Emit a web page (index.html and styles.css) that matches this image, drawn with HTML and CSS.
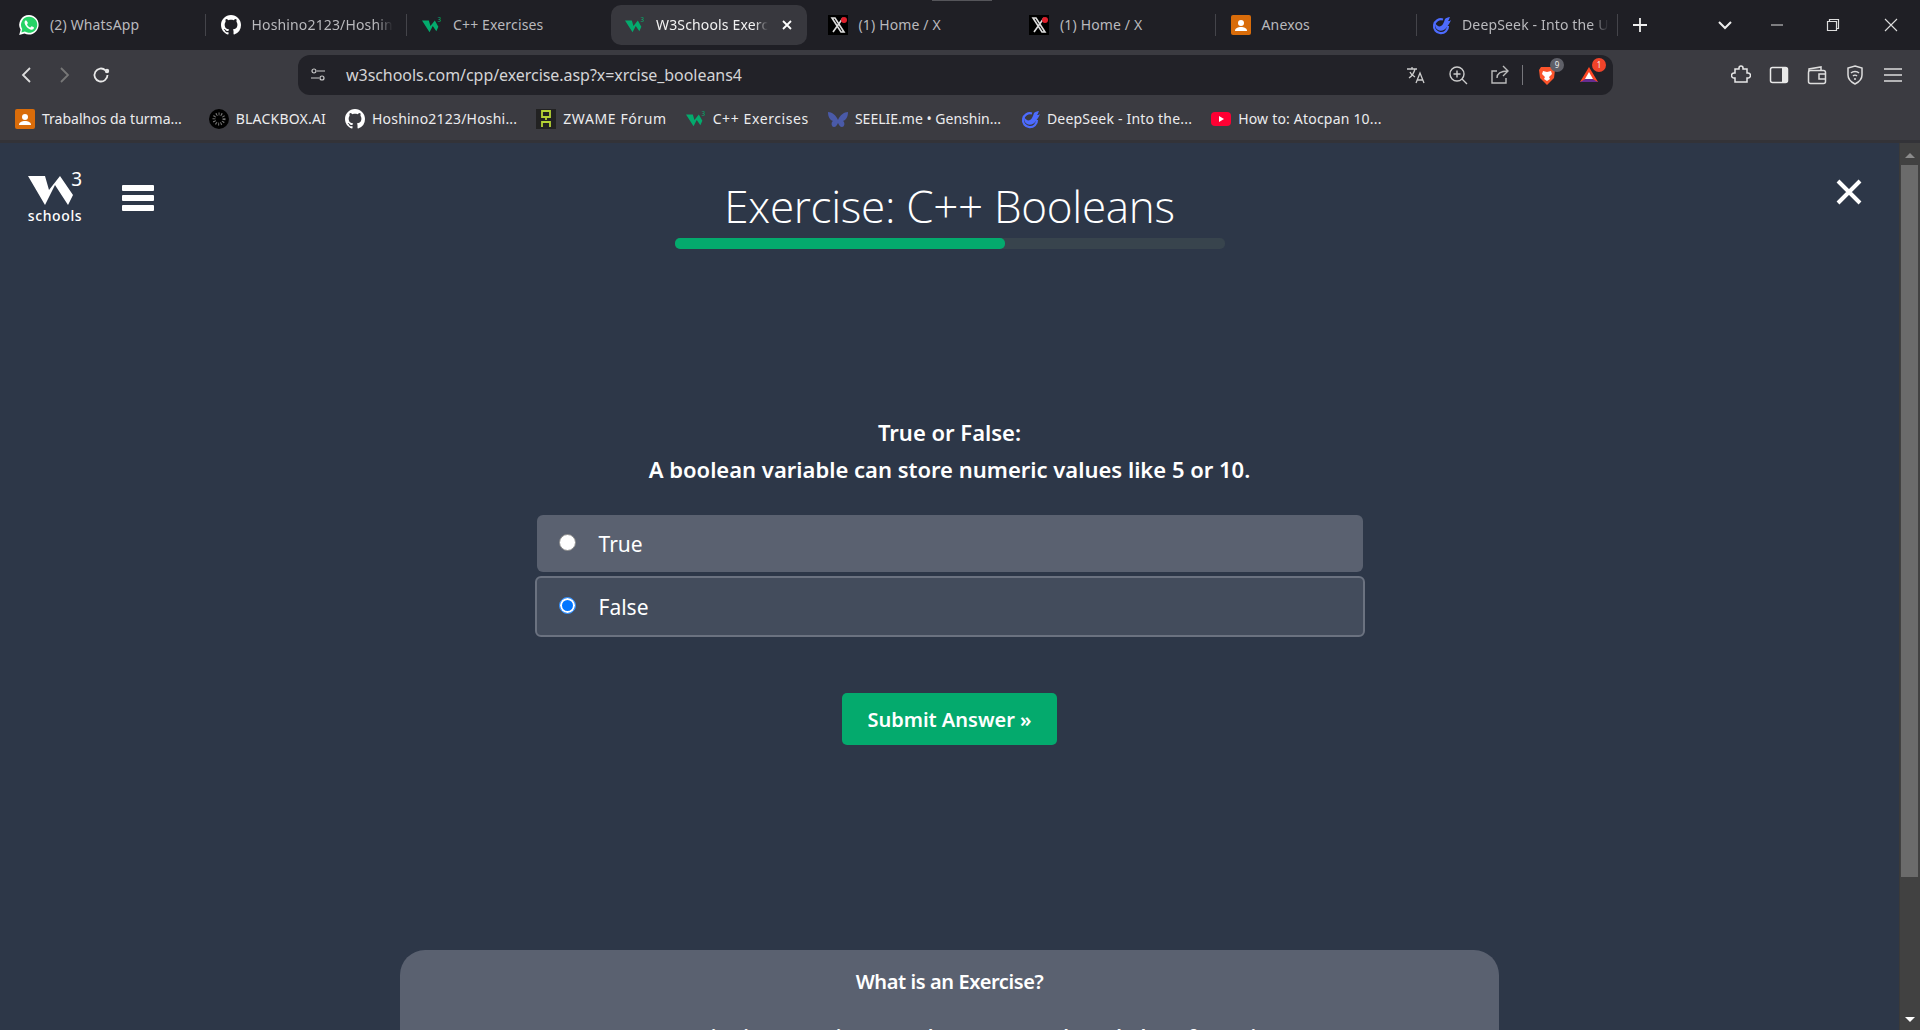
FILE: index.html
```html
<!DOCTYPE html>
<html lang="en">
<head>
    <meta charset="UTF-8">
    <title>W3Schools Exercise</title>
    <link rel="stylesheet" href="styles.css">
</head>
<body>
    <svg class="defs" width="0" height="0">
        <symbol id="i-github" viewBox="0 0 16 16"><path fill="#fff" d="M8 0C3.58 0 0 3.58 0 8c0 3.54 2.29 6.53 5.47 7.59.4.07.55-.17.55-.38v-1.49c-2.01.37-2.53-.49-2.69-.94-.09-.23-.48-.94-.82-1.13-.28-.15-.68-.52-.01-.53.63-.01 1.08.58 1.23.82.72 1.21 1.87.87 2.33.66.07-.52.28-.87.51-1.07-1.78-.2-3.64-.89-3.64-3.95 0-.87.31-1.59.82-2.15-.08-.2-.36-1.02.08-2.12 0 0 .67-.21 2.2.82.64-.18 1.32-.27 2-.27s1.36.09 2 .27c1.53-1.04 2.2-.82 2.2-.82.44 1.1.16 1.92.08 2.12.51.56.82 1.27.82 2.15 0 3.07-1.87 3.75-3.65 3.95.29.25.54.73.54 1.48v2.2c0 .21.15.46.55.38A8 8 0 0 0 16 8c0-4.42-3.58-8-8-8z"/></symbol>
        <symbol id="i-w3" viewBox="0 0 22 18"><path fill="#04aa6d" d="M0 4h7.500l1.800 6 4.800-6 3.900 7-2.200 5-4-6-3.500 7z"/><text x="17" y="6" font-size="7" font-family="Noto Sans" fill="#04aa6d">3</text></symbol>
        <symbol id="i-x" viewBox="0 0 20 20"><rect width="20" height="20" fill="#000"/><path fill="none" stroke="#ddd" stroke-width="1.600" d="M4 3h3l9 14h-3zM15 3 5 17"/><circle cx="16" cy="5" r="3" fill="#e0202c"/></symbol>
        <symbol id="i-class" viewBox="0 0 20 20"><rect width="20" height="20" rx="2" fill="#d96c0a"/><circle cx="10" cy="8" r="3" fill="#fff"/><path fill="#fff" d="M4 16c0-3 3-4 6-4s6 1 6 4z"/></symbol>
        <symbol id="i-deep" viewBox="0 0 20 18"><path fill="none" stroke="#4d6bfe" stroke-width="2.200" d="M12 3.500A7 7 0 1 0 17 10"/><path fill="#4d6bfe" d="M4 7c2 3 4 4 6 3 2-1 3-4 4-7 1-1 3-2 5-2-1 2-1 3-2 4 1 0 2 0 3-1-1 3-3 5-4 7-2 3-6 5-9 3-2-1-3-3-3-7z"/></symbol>
    </svg>

    <div class="tab-strip">
        <div class="tab">
            <svg class="favicon" viewBox="0 0 20 20"><path fill="#fff" d="M10 0a9.800 9.800 0 0 0-8.400 14.800L.2 20l5.300-1.400A9.800 9.800 0 1 0 10 0z"/><path fill="#25d366" d="M10 1.800a8 8 0 0 0-6.800 12.200l-.8 3.400 3.500-.9A8 8 0 1 0 10 1.800z"/><path fill="#fff" d="M7 5.200c-.5 0-1.400.7-1.400 2.300 0 2.700 3.400 6.800 7 7.200 1.400 0 2.300-.9 2.400-2 0-.5-2-1.400-2.300-1.400-.5 0-.9 1.100-1.400 1.100-.9 0-3-2-3.200-3 0-.4.800-.9.800-1.300S7.500 5.200 7 5.200z"/></svg>
            <span class="tab-title">(2) WhatsApp</span>
        </div>
        <div class="tab">
            <svg class="favicon"><use href="#i-github"/></svg>
            <span class="tab-title tab-fade">Hoshino2123/Hoshin</span>
        </div>
        <div class="tab tab-short">
            <svg class="favicon"><use href="#i-w3"/></svg>
            <span class="tab-title">C++ Exercises</span>
        </div>
        <div class="tab tab-active">
            <svg class="favicon"><use href="#i-w3"/></svg>
            <span class="tab-title tab-fade">W3Schools Exerc</span>
            <svg class="tab-close" viewBox="0 0 10 10"><path d="M1 1l8 8M9 1l-8 8" stroke="#fff" stroke-width="1.800"/></svg>
        </div>
        <div class="tab tab-noline">
            <svg class="favicon"><use href="#i-x"/></svg>
            <span class="tab-title">(1) Home / X</span>
        </div>
        <div class="tab">
            <svg class="favicon"><use href="#i-x"/></svg>
            <span class="tab-title">(1) Home / X</span>
        </div>
        <div class="tab">
            <svg class="favicon"><use href="#i-class"/></svg>
            <span class="tab-title">Anexos</span>
        </div>
        <div class="tab tab-last">
            <svg class="favicon"><use href="#i-deep"/></svg>
            <span class="tab-title tab-fade">DeepSeek - Into the U</span>
        </div>
        <svg class="new-tab" viewBox="0 0 14 14"><path d="M7 0v14M0 7h14" stroke="#eee" stroke-width="1.800"/></svg>
        <div class="win-controls">
            <svg class="win-btn win-chevron" viewBox="0 0 14 14"><path d="M1 4l6 6 6-6" fill="none" stroke="#eee" stroke-width="2"/></svg>
            <svg class="win-btn" viewBox="0 0 14 14"><path d="M1 7h12" stroke="#ddd" stroke-width="1"/></svg>
            <svg class="win-btn win-restore" viewBox="0 0 14 14"><path d="M1.500 3.500h9v9h-9zM3.500 3.500v-2h9v9h-2" fill="none" stroke="#ddd" stroke-width="1.200"/></svg>
            <svg class="win-btn" viewBox="0 0 14 14"><path d="M1 1l12 12M13 1L1 13" stroke="#ddd" stroke-width="1.100"/></svg>
        </div>
    </div>

    <div class="toolbar">
        <svg class="tool-icon" viewBox="0 0 20 20"><path d="M13 3l-7 7 7 7" fill="none" stroke="#ddd" stroke-width="1.800"/></svg>
        <svg class="tool-icon" viewBox="0 0 20 20"><path d="M7 3l7 7-7 7" fill="none" stroke="#777" stroke-width="1.800"/></svg>
        <svg class="tool-icon" viewBox="0 0 20 20"><path d="M16.500 10a6.500 6.500 0 1 1-2-4.700" fill="none" stroke="#e8e8e8" stroke-width="1.800"/><circle cx="16" cy="6" r="2.200" fill="#e8e8e8"/></svg>
        <div class="omnibox">
            <svg class="site-icon" viewBox="0 0 16 16"><g fill="none" stroke="#ccc" stroke-width="1.200"><circle cx="4" cy="4" r="2"/><path d="M7 4h8M1 11h8"/><circle cx="12" cy="11" r="2"/></g></svg>
            <span class="url">w3schools.com/cpp/exercise.asp?x=xrcise_booleans4</span>
            <div class="omni-icons">
                <svg class="omni-icon" viewBox="0 0 20 20"><path d="M1 4h10M6 2v2M3 13c3-2 5-5 6-9M4 7c1 3 3 4 5 5M10 18l4-10 4 10M11.500 15h5" fill="none" stroke="#ccc" stroke-width="1.300"/></svg>
                <svg class="omni-icon" viewBox="0 0 20 20"><g fill="none" stroke="#ccc" stroke-width="1.400"><circle cx="9" cy="9" r="7"/><path d="M14 14l5 5M9 5.500v7M5.500 9h7"/></g></svg>
                <svg class="omni-icon" viewBox="0 0 20 20"><path d="M7 6H2v12h14v-5M7 13c0-5 4-7 11-7M13 1l5 5-5 5" fill="none" stroke="#bbb" stroke-width="1.400"/></svg>
                <span class="omni-sep"></span>
                <div class="ext">
                    <svg class="omni-icon" viewBox="0 0 20 20"><path fill="#fb542b" d="M4 2h12l2 3-1 8-7 7-7-7-1-8z"/><path fill="#fff" d="M6 6l4 1 4-1 1 3-3 3 1 2-3 2-3-2 1-2-3-3z"/></svg>
                    <span class="badge badge-grey">9</span>
                </div>
                <div class="ext">
                    <svg class="omni-icon" viewBox="0 0 20 20"><path fill="#ff4724" d="M10 2l9 15H1z"/><path fill="#662d91" d="M1 17l9-5 9 5z"/><path fill="#fff" d="M10 7l4 7h-8z"/></svg>
                    <span class="badge badge-red">1</span>
                </div>
            </div>
        </div>
        <div class="right-tools">
            <svg class="tool-icon" viewBox="0 0 20 20"><path d="M8 3a2 2 0 0 1 4 0v1h4v4h1a2.300 2.300 0 0 1 0 5h-1v4H4v-4H3a2.300 2.300 0 0 1 0-5h1V4h4z" fill="none" stroke="#e8e8e8" stroke-width="1.500"/></svg>
            <svg class="tool-icon" viewBox="0 0 20 20"><rect x="1.500" y="2.500" width="17" height="15" rx="2" fill="none" stroke="#e8e8e8" stroke-width="1.500"/><rect x="13" y="3" width="5" height="14" fill="#e8e8e8"/></svg>
            <svg class="tool-icon" viewBox="0 0 20 20"><g fill="none" stroke="#ddd" stroke-width="1.500"><path d="M2 6V4l12-2v4"/><rect x="1.500" y="5.500" width="17" height="13" rx="2"/><path d="M18 9h-6v5h6"/></g></svg>
            <svg class="tool-icon" viewBox="0 0 20 20"><g fill="none" stroke="#ddd" stroke-width="1.500"><path d="M10 1l7 2v7c0 4-3 7-7 9-4-2-7-5-7-9V3z"/><path d="M6 8c2-2 6-2 8 0M8 11c1-1 3-1 4 0"/></g><circle cx="10" cy="14" r="1" fill="#ddd"/></svg>
            <svg class="tool-icon" viewBox="0 0 20 20"><path d="M1 4h18M1 10h18M1 16h18" stroke="#ddd" stroke-width="1.500"/></svg>
        </div>
    </div>

    <div class="bookmarks">
        <div class="bookmark bookmark-first"><svg class="bm-icon"><use href="#i-class"/></svg><span>Trabalhos da turma...</span></div>
        <div class="bookmark"><svg class="bm-icon" viewBox="0 0 20 20"><circle cx="10" cy="10" r="10" fill="#000"/><circle cx="10" cy="10" r="5" fill="none" stroke="#777" stroke-width="3" stroke-dasharray="1 1.500"/></svg><span>BLACKBOX.AI</span></div>
        <div class="bookmark"><svg class="bm-icon"><use href="#i-github"/></svg><span>Hoshino2123/Hoshi...</span></div>
        <div class="bookmark bookmark-wide"><svg class="bm-icon" viewBox="0 0 20 20"><rect width="20" height="20" fill="#222"/><path d="M6 2h8v6H6zM10 8v3M6 18v-5h8v5" fill="none" stroke="#b5d334" stroke-width="1.800"/></svg><span>ZWAME Fórum</span></div>
        <div class="bookmark bookmark-wide"><svg class="bm-icon"><use href="#i-w3"/></svg><span>C++ Exercises</span></div>
        <div class="bookmark bookmark-tight"><svg class="bm-icon" viewBox="0 0 20 20"><path fill="#4a5aa8" d="M0 3c4 0 8 3 10 8 2-5 6-8 10-8 0 5-2 8-5 9 2 1 2 6-1 6-2 0-3-2-4-4-1 2-2 4-4 4-3 0-3-5-1-6-3-1-5-4-5-9z"/></svg><span>SEELIE.me • Genshin...</span></div>
        <div class="bookmark"><svg class="bm-icon"><use href="#i-deep"/></svg><span>DeepSeek - Into the...</span></div>
        <div class="bookmark"><svg class="bm-icon" viewBox="0 0 20 20"><rect y="3" width="20" height="14" rx="4" fill="#ff0033"/><path d="M8 7l5 3-5 3z" fill="#fff"/></svg><span>How to: Atocpan 10...</span></div>
    </div>

    <div class="viewport">
        <main class="page">
            <header class="page-head">
                <div class="logo-group">
                    <div class="logo">
                        <svg class="logo-mark" viewBox="0 0 45 29"><path fill="#fff" d="M0 0h17l4 14L32 0l13 19-5 10L27 9 17 29z"/></svg>
                        <span class="logo-three">3</span>
                        <span class="logo-text">schools</span>
                    </div>
                    <div class="burger"><span></span><span></span><span></span></div>
                </div>
                <div class="head-center">
                    <h1 class="title">Exercise: C++ Booleans</h1>
                    <div class="progress"><div class="progress-fill" style="width: 60%"></div></div>
                </div>
                <svg class="close" viewBox="0 0 26 26"><path d="M2 2l22 22M24 2L2 24" stroke="#fff" stroke-width="4"/></svg>
            </header>

            <section class="quiz">
                <p class="question">True or False:<br>A boolean variable can store numeric values like 5 or 10.</p>
                <div class="options">
                    <label class="option option-hover"><span class="radio"></span>True</label>
                    <label class="option option-checked"><span class="radio radio-on"></span>False</label>
                </div>
                <button class="submit">Submit Answer »</button>
            </section>

            <section class="info-card">
                <h2 class="info-title">What is an Exercise?</h2>
                <p class="info-text">An exercise is a question or task to test your knowledge of a topic.</p>
            </section>
        </main>
        <div class="scrollbar">
            <span class="arrow-up"></span>
            <div class="scroll-track"><div class="scroll-thumb"></div></div>
            <span class="arrow-down"></span>
        </div>
    </div>
</body>
</html>
```

FILE: styles.css
```css
html, body {
    margin: 0;
    height: 1030px;
    overflow: hidden;
}
body {
    display: flex;
    flex-direction: column;
    font-family: "Noto Sans", sans-serif;
    background-color: #2d3748;
    color: white;
}
.defs {
    position: absolute;
}
.tab-strip {
    height: 50px;
    flex: none;
    display: flex;
    align-items: center;
    padding-left: 4px;
    background-color: #1f1f25;
    box-sizing: border-box;
}
.tab {
    width: 201.5px;
    height: 40px;
    flex: none;
    box-sizing: border-box;
    display: flex;
    align-items: center;
    padding-left: 15px;
    padding-right: 6px;
    position: relative;
    font-size: 14px;
    letter-spacing: 0.15px;
    color: #b9b9bd;
}
.tab::after {
    content: "";
    position: absolute;
    right: 0;
    top: 9px;
    height: 22px;
    width: 1px;
    background-color: #44444a;
}
.tab-short::after, .tab-active::after, .tab-noline::after {
    display: none;
}
.tab-noline::before {
    content: "";
    position: absolute;
    left: 119px;
    top: -5px;
    width: 60px;
    height: 1px;
    background-color: #55555a;
}
.tab-active {
    width: 196px;
    margin: 0 5.5px 0 2.5px;
    padding-left: 14px;
    padding-right: 15px;
    background-color: #38383e;
    border-radius: 10px;
    color: #f2f2f2;
}
.tab-last {
    margin-left: -1px;
}
.favicon {
    width: 20px;
    height: 20px;
    flex: none;
    margin-right: 11px;
}
.tab-title {
    flex: 1;
    margin-top: -2px;
    white-space: nowrap;
}
.tab-fade {
    -webkit-mask-image: linear-gradient(to right, black 88%, transparent);
    mask-image: linear-gradient(to right, black 88%, transparent);
    flex: none;
}
.tab-close {
    width: 10px;
    height: 10px;
    margin-left: auto;
    flex: none;
}
.new-tab {
    width: 14px;
    height: 14px;
    margin-left: 15px;
}
.win-controls {
    margin-left: auto;
    display: flex;
    align-items: center;
    gap: 42px;
    padding-right: 22px;
}
.win-btn {
    width: 14px;
    height: 14px;
}
.win-chevron {
    margin-right: -4px;
}
.win-restore {
    margin-right: 2px;
}
.toolbar {
    height: 45px;
    flex: none;
    display: flex;
    align-items: flex-start;
    background-color: #3b3b41;
    box-sizing: border-box;
    padding-top: 5px;
    padding-left: 17px;
    gap: 17px;
}
.tool-icon {
    width: 20px;
    height: 20px;
    flex: none;
    margin-top: 10px;
}
.omnibox {
    width: 1315px;
    height: 40px;
    flex: none;
    margin-left: 170px;
    background-color: #222228;
    border-radius: 12px;
    display: flex;
    align-items: center;
    box-sizing: border-box;
    padding-left: 12px;
    padding-right: 14px;
}
.site-icon {
    width: 16px;
    height: 16px;
    margin-right: 20px;
}
.url {
    font-size: 16px;
    letter-spacing: -0.05px;
    color: #d4d4d6;
}
.omni-icons {
    margin-left: auto;
    display: flex;
    align-items: center;
    gap: 22px;
}
.omni-icon {
    width: 20px;
    height: 20px;
    display: block;
}
.omni-sep {
    width: 1px;
    height: 20px;
    background-color: #77777c;
    margin: 0 -8px 0 -10px;
}
.ext {
    position: relative;
}
.badge {
    position: absolute;
    top: -7px;
    right: -7px;
    width: 14px;
    height: 14px;
    border-radius: 50%;
    font-size: 8px;
    line-height: 14px;
    text-align: center;
    color: #eee;
}
.badge-grey {
    background-color: #5f6068;
}
.badge-red {
    background-color: #f0432a;
}
.right-tools {
    display: flex;
    gap: 18px;
    margin-left: 101px;
}
.bookmarks {
    height: 48px;
    flex: none;
    display: flex;
    align-items: center;
    padding-left: 15px;
    padding-top: 2px;
    gap: 19px;
    background-color: #3b3b41;
    border-bottom: 3px solid #333338;
    box-sizing: border-box;
    font-size: 14px;
    letter-spacing: 0.2px;
    color: #ececee;
}
.bookmark {
    display: flex;
    align-items: center;
    gap: 7px;
    white-space: nowrap;
}
.bookmark-first {
    margin-right: 8px;
    letter-spacing: 0;
}
.bookmark-wide {
    letter-spacing: 0.6px;
}
.bookmark-tight {
    letter-spacing: 0;
}
.bm-icon {
    width: 20px;
    height: 20px;
    flex: none;
}
.viewport {
    flex: 1;
    min-height: 0;
    display: flex;
}
.page {
    flex: 1;
    min-width: 0;
    overflow: hidden;
    background-color: #2d3748;
}
.page-head {
    height: 106px;
    display: flex;
    position: relative;
    justify-content: center;
}
.logo-group {
    position: absolute;
    left: 28px;
    top: 29px;
    display: flex;
    gap: 40px;
}
.logo {
    position: relative;
    width: 54px;
    height: 51px;
}
.logo-mark {
    position: absolute;
    left: 0;
    top: 4px;
    width: 45px;
    height: 29px;
}
.logo-three {
    position: absolute;
    right: 0;
    top: -5px;
    font-size: 19px;
    line-height: 24px;
}
.logo-text {
    position: absolute;
    left: -1px;
    bottom: 0;
    width: 56px;
    font-size: 14px;
    line-height: 14px;
    font-weight: 500;
    letter-spacing: 0.6px;
    text-align: center;
}
.burger {
    width: 32px;
    display: flex;
    flex-direction: column;
    gap: 4px;
    margin-top: 13px;
}
.burger span {
    height: 6px;
    background-color: white;
    border-radius: 1px;
}
.head-center {
    width: 550px;
    padding-top: 38px;
}
.title {
    margin: 0 0 6px;
    font-size: 44px;
    line-height: 51px;
    font-weight: 300;
    font-family: "Open Sans", sans-serif;
    text-align: center;
    white-space: nowrap;
    letter-spacing: -0.3px;
}
.progress {
    height: 11px;
    border-radius: 5px;
    background-color: #38444d;
}
.progress-fill {
    height: 100%;
    border-radius: 5px;
    background-color: #04aa6d;
}
.close {
    position: absolute;
    left: 1836px;
    top: 36px;
    width: 26px;
    height: 26px;
}
.quiz {
    width: 830px;
    margin: 0 auto;
    padding-top: 165px;
    display: flex;
    flex-direction: column;
    align-items: center;
}
.question {
    margin: 0 0 27px;
    font-size: 22px;
    line-height: 37px;
    font-weight: 600;
    text-align: center;
    white-space: nowrap;
}
.options {
    align-self: stretch;
    display: flex;
    flex-direction: column;
    gap: 4px;
}
.option {
    height: 57px;
    margin: 0 2px;
    display: flex;
    align-items: center;
    padding-left: 22px;
    border-radius: 6px;
    font-size: 21px;
}
.option-hover {
    background-color: #5a6170;
}
.option-checked {
    height: 61px;
    margin: 0;
    padding-left: 22px;
    background-color: #434c5c;
    border: 2px solid #6b7280;
    box-sizing: border-box;
}
.radio {
    width: 17px;
    height: 17px;
    border-radius: 50%;
    background-color: white;
    box-sizing: border-box;
    border: 1px solid #8a8a8a;
    margin-right: 23px;
    margin-top: -2px;
    flex: none;
}
.radio-on {
    background-color: #0075ff;
    border: 1px solid #3c96ff;
    box-shadow: inset 0 0 0 2px white;
}
.submit {
    margin-top: 56px;
    width: 215px;
    height: 52px;
    border: none;
    border-radius: 5px;
    background-color: #04aa6d;
    color: white;
    font-family: "Noto Sans", sans-serif;
    font-size: 20px;
    font-weight: 600;
}
.info-card {
    width: 1099px;
    margin: 205px auto 0;
    padding-top: 18px;
    box-sizing: border-box;
    background-color: #5a6170;
    border-radius: 25px 25px 0 0;
    text-align: center;
    height: 120px;
}
.info-title {
    margin: 0;
    font-size: 20px;
    line-height: 28px;
    font-weight: 600;
    letter-spacing: -0.4px;
}
.info-text {
    margin: 27px 0 0;
    font-size: 20px;
    font-weight: 600;
}
.scrollbar {
    width: 21px;
    flex: none;
    display: flex;
    flex-direction: column;
    align-items: center;
    background-color: #414141;
    border-left: 1px solid #3a3a3a;
    box-sizing: border-box;
}
.arrow-up {
    margin: 10px 0 7px;
    border-left: 5px solid transparent;
    border-right: 5px solid transparent;
    border-bottom: 5px solid #8c8c8c;
}
.scroll-track {
    flex: 1;
    align-self: stretch;
    padding: 0 2px 0 1px;
}
.scroll-thumb {
    height: 712px;
    background-color: #6b6b6b;
}
.arrow-down {
    margin: 4px 0 8px;
    border-left: 5px solid transparent;
    border-right: 5px solid transparent;
    border-top: 5px solid white;
}
```
